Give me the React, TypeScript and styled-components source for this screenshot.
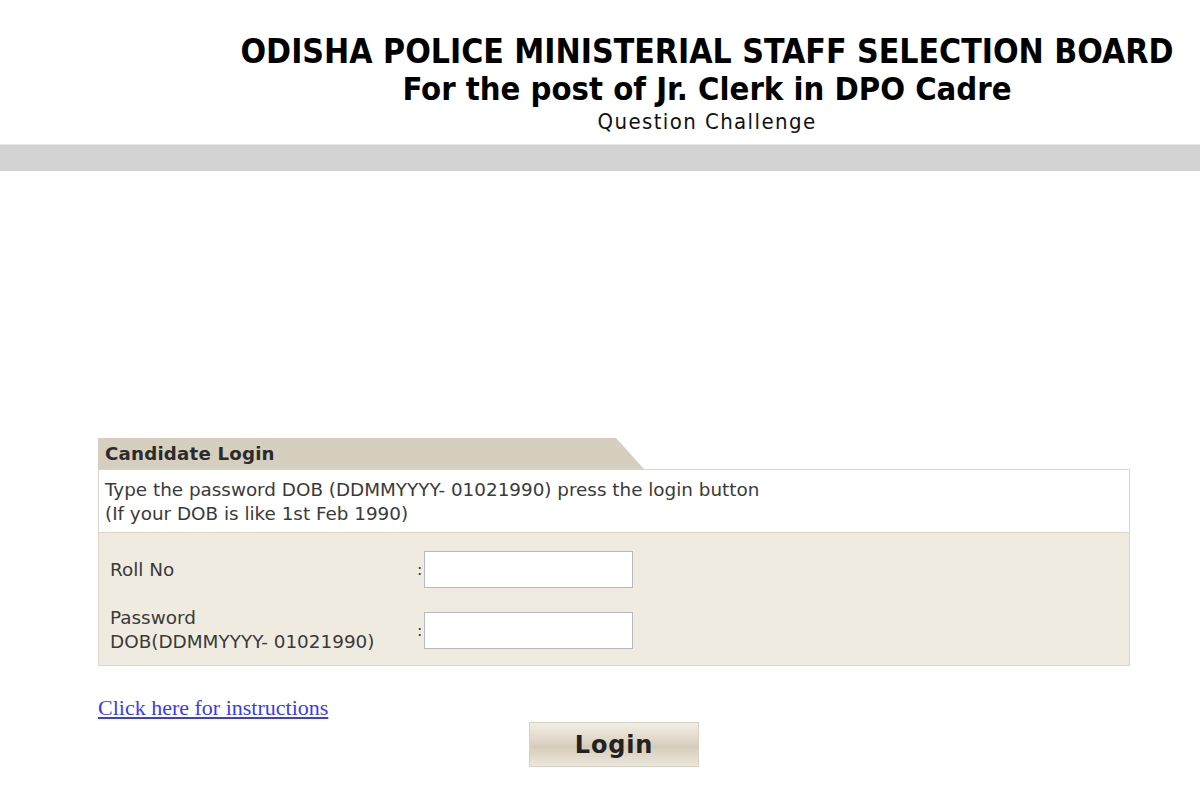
import styled, { createGlobalStyle } from 'styled-components';

const GlobalStyle = createGlobalStyle`
  html, body {
    margin: 0;
    padding: 0;
    background: #ffffff;
  }
  body {
    font-family: "DejaVu Sans", Verdana, sans-serif;
    color: #333;
  }
`;

const Page = styled.div`
  width: 1200px;
  min-height: 800px;
  display: flex;
  flex-direction: column;
`;

const Header = styled.header`
  display: flex;
  flex-direction: column;
  align-items: center;
  padding: 33px 0 10px 214px;
  color: #000;
`;

const Title = styled.h1<{ size: number }>`
  margin: 0;
  font-family: "DejaVu Sans Condensed", "DejaVu Sans", sans-serif;
  font-stretch: condensed;
  font-weight: bold;
  font-size: ${p => p.size}px;
  line-height: ${p => p.size + 4}px;
  white-space: nowrap;
`;

const SubTitle = styled.div`
  margin-top: 3px;
  font-family: "DejaVu Sans Condensed", "DejaVu Sans", sans-serif;
  font-stretch: condensed;
  font-size: 22px;
  letter-spacing: 1.4px;
  line-height: 24px;
  color: #111;
`;

const GreyBar = styled.div`
  height: 26px;
  background: #d3d3d3;
  border-top: 1px solid #e6e6e6;
`;

const Main = styled.main`
  padding: 267px 70px 0 98px;
`;

const Tab = styled.div`
  width: 518px;
  height: 31px;
  display: flex;
  align-items: center;
  padding-left: 7px;
  box-sizing: border-box;
  position: relative;
  background: #d6cfbf;
  font-size: 18.2px;
  font-weight: bold;
  letter-spacing: 0.2px;
  color: #2b2b2b;

  &::after {
    content: '';
    position: absolute;
    right: -28px;
    top: 0;
    border-bottom: 31px solid #d6cfbf;
    border-right: 28px solid transparent;
  }
`;

const Notice = styled.div`
  border: 1px solid #ddd5c5;
  border-bottom: none;
  background: #fff;
  padding: 8px 6px 6px;
  font-size: 18.35px;
  line-height: 24px;
  color: #3a3a3a;
`;

const Form = styled.div`
  border: 1px solid #ddd5c5;
  background: #efebe1;
  padding: 18px 11px 11px;
  display: flex;
  flex-direction: column;
  gap: 18px;
`;

const Row = styled.div`
  display: grid;
  grid-template-columns: 307px 7px 209px;
  align-items: center;
`;

const Label = styled.div`
  font-size: 18.4px;
  line-height: 24px;
  color: #3a3a3a;
`;

const Colon = styled.span`
  font-size: 16px;
  color: #3a3a3a;
`;

const Input = styled.input`
  width: 209px;
  height: 37px;
  box-sizing: border-box;
  border: 1px solid #b8b8b8;
  background: #fff;
  padding: 2px 4px;
  outline: none;
`;

const Footer = styled.div`
  display: flex;
  flex-direction: column;
  padding-top: 29px;
`;

const InstructionLink = styled.a`
  font-family: "Liberation Serif", "Times New Roman", serif;
  font-size: 22px;
  line-height: 26px;
  color: #3b3bf0;
  text-decoration: underline;
  align-self: flex-start;
`;

const LoginButton = styled.button`
  align-self: flex-start;
  margin: 1px 0 0 431px;
  width: 170px;
  height: 45px;
  border: 1px solid #d9d0bf;
  background: linear-gradient(to bottom, #f3eee6 0%, #ddd4c4 45%, #d6ccbb 55%, #ece6dc 100%);
  font-family: "DejaVu Sans", Verdana, sans-serif;
  font-size: 24px;
  font-weight: 600;
  color: #222;
  letter-spacing: 0.8px;
  cursor: pointer;
`;

export default function App() {
  return (
    <Page>
      <GlobalStyle />
      <Header>
        <Title size={33.5}>ODISHA POLICE MINISTERIAL STAFF SELECTION BOARD</Title>
        <Title size={32.5}>For the post of Jr. Clerk in DPO Cadre</Title>
        <SubTitle>Question Challenge</SubTitle>
      </Header>
      <GreyBar />
      <Main>
        <Tab>Candidate Login</Tab>
        <Notice>
          Type the password DOB (DDMMYYYY- 01021990) press the login button
          <br />
          (If your DOB is like 1st Feb 1990)
        </Notice>
        <Form>
          <Row>
            <Label>Roll No</Label>
            <Colon>:</Colon>
            <Input type="text" />
          </Row>
          <Row>
            <Label>
              Password
              <br />
              DOB(DDMMYYYY- 01021990)
            </Label>
            <Colon>:</Colon>
            <Input type="password" />
          </Row>
        </Form>
        <Footer>
          <InstructionLink href="#">Click here for instructions</InstructionLink>
          <LoginButton type="button">Login</LoginButton>
        </Footer>
      </Main>
    </Page>
  );
}
